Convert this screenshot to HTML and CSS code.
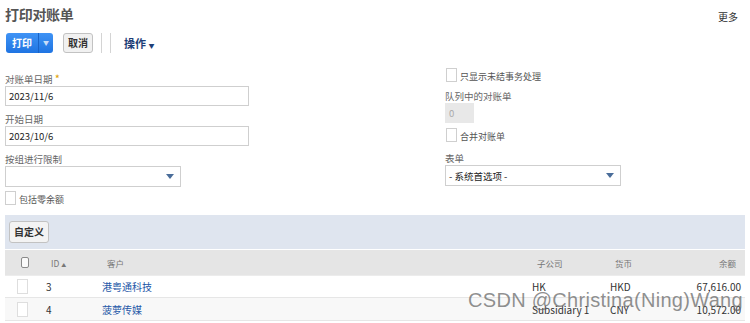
FILE: index.html
```html
<!DOCTYPE html>
<html lang="zh-CN">
<head>
    <meta charset="UTF-8">
    <title>打印对账单</title>
    <link rel="stylesheet" href="styles.css">
</head>
<body>
<div class="page">
    <div class="page-header">
        <h1>打印对账单</h1>
        <span class="more">更多</span>
    </div>

    <div class="toolbar">
        <div class="btn-split">
            <span class="btn-main">打印</span>
            <span class="btn-arrow">▼</span>
        </div>
        <span class="btn-plain">取消</span>
        <span class="sep"></span>
        <span class="sep"></span>
        <span class="actions">操作 <span class="caret">▼</span></span>
    </div>

    <div class="form">
        <div class="col-left">
            <div class="field">
                <label>对账单日期 <span class="req">*</span></label>
                <div class="input">2023/11/6</div>
            </div>
            <div class="field">
                <label>开始日期</label>
                <div class="input">2023/10/6</div>
            </div>
            <div class="field">
                <label>按组进行限制</label>
                <div class="select short"><span></span><span class="tri"></span></div>
            </div>
            <div class="check"><span class="box"></span><span>包括零余额</span></div>
        </div>
        <div class="col-right">
            <div class="check"><span class="box"></span><span>只显示未结事务处理</span></div>
            <div class="field queue">
                <label>队列中的对账单</label>
                <div class="input disabled">0</div>
            </div>
            <div class="check"><span class="box"></span><span>合并对账单</span></div>
            <div class="field form-pick">
                <label>表单</label>
                <div class="select"><span>- 系统首选项 -</span><span class="tri"></span></div>
            </div>
        </div>
    </div>

    <div class="band">
        <span class="btn-plain">自定义</span>
    </div>

    <div class="table">
        <div class="row head">
            <div class="c-check"><span class="hbox"></span></div>
            <div class="c-id">ID <span class="sort">▲</span></div>
            <div class="c-cust">客户</div>
            <div class="c-sub">子公司</div>
            <div class="c-cur">货币</div>
            <div class="c-bal">余额</div>
        </div>
        <div class="row">
            <div class="c-check"><span class="box"></span></div>
            <div class="c-id">3</div>
            <div class="c-cust"><a href="#">港粤通科技</a></div>
            <div class="c-sub">HK</div>
            <div class="c-cur">HKD</div>
            <div class="c-bal">67,616.00</div>
        </div>
        <div class="row alt">
            <div class="c-check"><span class="box"></span></div>
            <div class="c-id">4</div>
            <div class="c-cust"><a href="#">菠萝传媒</a></div>
            <div class="c-sub">Subsidiary 1</div>
            <div class="c-cur">CNY</div>
            <div class="c-bal">10,572.00</div>
        </div>
    </div>

    <div class="watermark">CSDN @Christina(Ning)Wang</div>
</div>
</body>
</html>
```

FILE: styles.css
```css
body {
    margin: 0;
    font-family: "Noto Sans CJK SC", sans-serif;
    background: #fff;
    color: #333;
}
.page {
    position: relative;
    width: 750px;
    height: 323px;
    overflow: hidden;
}
.page-header {
    display: flex;
    justify-content: space-between;
    align-items: flex-start;
    padding: 4px 12px 0 5px;
    height: 33px;
    box-sizing: border-box;
}
h1 {
    margin: 0;
    font-size: 14px;
    line-height: 21px;
    font-weight: bold;
    color: #555;
    letter-spacing: -0.3px;
}
.more {
    font-size: 10px;
    color: #333;
    margin-top: 5px;
}
.toolbar {
    display: flex;
    align-items: center;
    height: 20px;
    padding-left: 6px;
}
.btn-split {
    display: flex;
    height: 20px;
    border-radius: 3px;
    background: linear-gradient(#3f93f5, #1f74e2);
    color: #fff;
    font-size: 10px;
    font-weight: bold;
}
.btn-main {
    width: 32px;
    line-height: 20px;
    text-align: center;
}
.btn-arrow {
    width: 14px;
    line-height: 20px;
    text-align: center;
    font-size: 6px;
    color: #c9dcf8;
    border-left: 1px solid #1a63c6;
}
.btn-plain {
    display: inline-block;
    height: 18px;
    line-height: 18px;
    padding: 0 4px;
    margin-left: 10px;
    border: 1px solid #c2c2c2;
    border-radius: 3px;
    background: #f1f1f1;
    font-size: 10px;
    font-weight: bold;
    color: #333;
}
.sep {
    width: 1px;
    height: 20px;
    background: #d4d4d4;
    margin-left: 8px;
}
.actions {
    margin-left: 13px;
    font-size: 11px;
    font-weight: bold;
    color: #1f3f78;
}
.caret {
    font-size: 6px;
    vertical-align: middle;
}
.form {
    display: flex;
    height: 162px;
    box-sizing: border-box;
    padding-left: 5px;
}
.col-left {
    width: 244px;
    padding-top: 20px;
}
.col-right {
    margin-left: 196px;
    width: 176px;
    padding-top: 15px;
}
.field {
    margin-bottom: 8px;
}
.field label {
    display: block;
    font-size: 9.5px;
    color: #666;
    line-height: 11px;
    margin-bottom: 1px;
}
.req {
    color: #e0a100;
    font-size: 11px;
}
.input {
    height: 18px;
    border: 1px solid #cfcfcf;
    font-size: 9.5px;
    line-height: 18px;
    padding-left: 3px;
    color: #222;
}
.input.disabled {
    width: 24px;
    background: #e8e8e8;
    border-color: #e8e8e8;
    color: #aaa;
}
.select {
    display: flex;
    justify-content: space-between;
    align-items: center;
    height: 19px;
    border: 1px solid #cfcfcf;
    padding: 0 6px 0 3px;
    font-size: 9.5px;
    color: #222;
}
.select.short {
    width: 165px;
}
.tri {
    width: 0;
    height: 0;
    border-left: 4px solid transparent;
    border-right: 4px solid transparent;
    border-top: 5px solid #4a6d9a;
}
.check {
    display: flex;
    align-items: flex-end;
    font-size: 9px;
    line-height: 11px;
    color: #555;
    height: 14px;
}
.check .box {
    width: 9px;
    height: 12px;
    border: 1px solid #cfcfcf;
    margin-right: 3px;
    background: #fff;
}
.col-left .check {
    margin-top: -4px;
}
.col-right .check {
    margin-left: 1px;
}
.field.queue {
    margin: 9px 0 5px;
}
.field.form-pick {
    margin-top: 11px;
}
.band {
    margin: 0 5px;
    height: 34px;
    background: #dfe5ef;
    display: flex;
    align-items: center;
}
.band .btn-plain {
    margin-left: 4px;
    height: 20px;
    line-height: 20px;
    padding: 0 4px;
    font-size: 10px;
    background: #f3f3f3;
}
.table {
    margin: 1px 5px 0;
}
.row {
    display: grid;
    grid-template-columns: 35px 56px 430px 78px 76px 1fr;
    align-items: center;
    height: 21px;
    font-size: 10px;
    color: #333;
    border-bottom: 1px solid #e6e6e6;
    background: #fff;
}
.row.alt {
    background: #f8f8f8;
    height: 22px;
}
.row.head {
    height: 25px;
    background: #e5e5e5;
    border-bottom: 1px solid #ececec;
    font-size: 8.5px;
    color: #777;
}
.row > div {
    padding-left: 6px;
    white-space: nowrap;
}
.row.head > div {
    padding-left: 11px;
}
.row .c-check {
    padding-left: 12px;
    display: flex;
}
.row.head .c-check {
    padding-left: 16px;
}
.row .c-bal {
    text-align: right;
    padding-right: 4px;
}
.row.head .c-bal {
    padding-right: 9px;
}
.hbox {
    width: 6px;
    height: 9px;
    border: 1px solid #8a8a8a;
    border-radius: 2px;
    background: #fafafa;
}
.row .box {
    width: 9px;
    height: 13px;
    border: 1px solid #dedede;
    background: #fff;
}
.sort {
    font-size: 5px;
    vertical-align: middle;
}
.c-cust a {
    color: #2557a7;
    text-decoration: none;
}
.watermark {
    position: absolute;
    left: 468px;
    top: 289px;
    font-family: "Liberation Sans", sans-serif;
    font-size: 20px;
    letter-spacing: 0.3px;
    color: rgba(95, 95, 95, 0.7);
    white-space: nowrap;
}
```
